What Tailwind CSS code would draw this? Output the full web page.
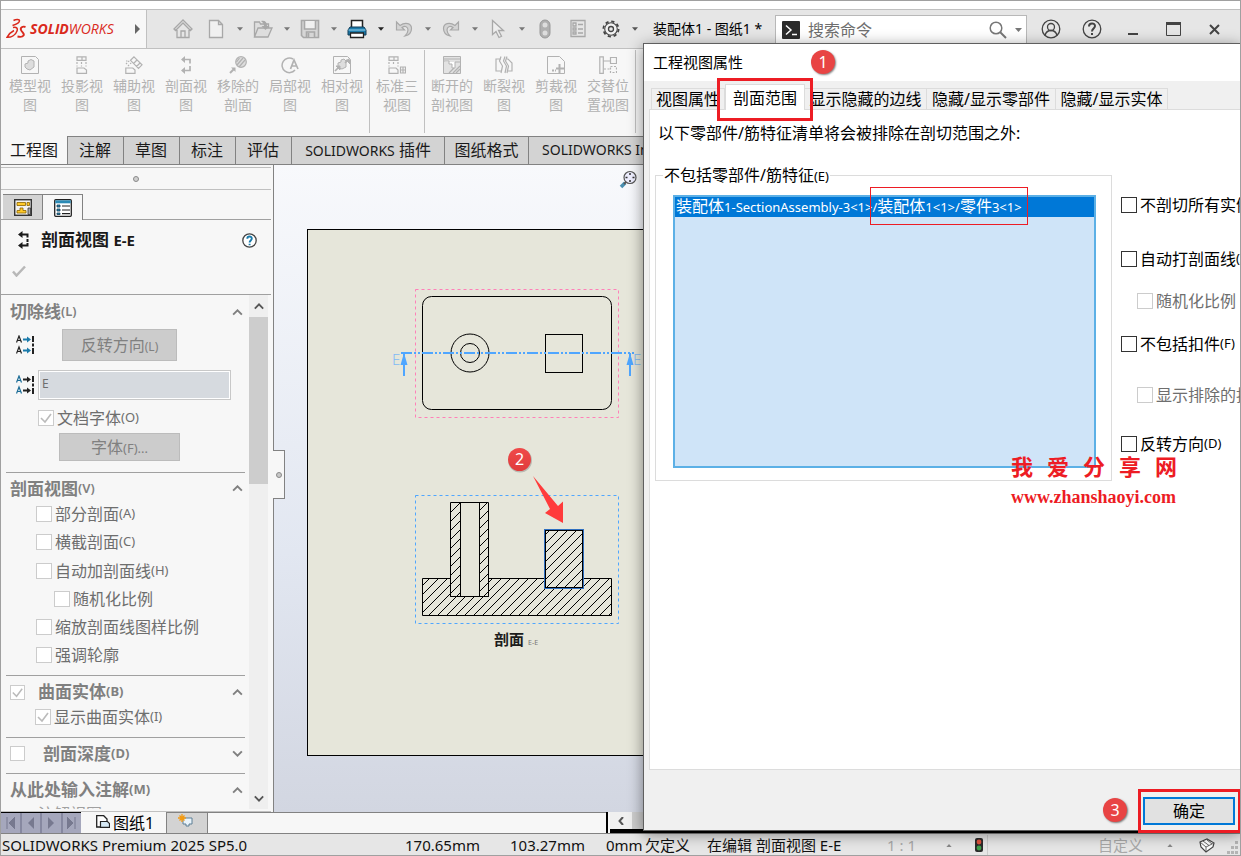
<!DOCTYPE html>
<html lang="zh-CN">
<head>
<meta charset="utf-8">
<title>SOLIDWORKS - 工程视图属性</title>
<script src="https://cdn.jsdelivr.net/npm/@tailwindcss/browser@4"></script>
</head>
<body class="overflow-hidden bg-white font-['Noto_Sans','Noto_Sans_CJK_SC',sans-serif]">
<svg class="hidden">
  <symbol id="caret" viewBox="0 0 7 4"><path d="M0 0h7L3.5 4z" fill="currentColor"/></symbol>
  <symbol id="tick" viewBox="0 0 16 16"><path d="M3 8l4 4 6-8" fill="none" stroke="currentColor" stroke-width="1.6"/></symbol>
  <symbol id="up" viewBox="0 0 12 8"><path d="M1 6.5l5-5 5 5" fill="none" stroke="currentColor" stroke-width="2.2"/></symbol>
  <symbol id="down" viewBox="0 0 12 8"><path d="M1 1.5l5 5 5-5" fill="none" stroke="currentColor" stroke-width="2.2"/></symbol>
</svg>

<div class="relative flex h-screen flex-col overflow-hidden border border-[#a0a0a0] bg-[#f7f7f7]">
  <div class="h-2 shrink-0 bg-white"></div>

  <!-- Title bar -->
  <header class="flex h-10 shrink-0 items-stretch border-y border-[#c0c0c0] bg-[#e6e6e6] text-[#a8a8a8]">
    <div class="flex w-[146px] shrink-0 items-center border-r border-[#c0c0c0] bg-[#f7f7f7] pl-[5px] text-[#da291c]">
      <svg class="h-[22px] w-5 shrink-0" viewBox="0 0 20 22" fill="none" stroke="currentColor" stroke-width="1.500"><path d="M7.500 2.500C10 1 13.500 1 13.500 2.800C13.500 4.800 10 6.500 6.500 7.500"/><path d="M7 9.500C10.500 8.700 12 10 11 13C9.500 17.500 5 19.500 1 19.300C2.500 16.500 5 14 8 12.500"/><path d="M19.500 9C16.500 8 14 9.500 15 12C16 14.500 19 15.500 17.500 17.500C16.500 19 13.500 19 11.500 18.500" stroke-width="1.900"/></svg>
      <span class="ml-1 font-['Open_Sans',sans-serif] text-sm italic"><b>SOLID</b>WORKS</span>
      <svg class="ml-auto mr-[6px] h-[10px] w-[5px] text-[#666]" viewBox="0 0 5 10"><path d="M0 0l5 5-5 5z" fill="currentColor"/></svg>
    </div>
    <div class="flex flex-1 items-center pl-6">
      <button class="mr-[9px] grid w-6 place-items-center" aria-label="主页"><svg class="size-5" viewBox="0 0 20 20" fill="none" stroke="currentColor" stroke-width="1.300"><path d="M1 10L10 1l9 9-1.500 1.500L10 4l-7.500 7.500zM4 11v7.500h12V11M8 18v-6h4v6"/></svg></button>
      <button class="grid w-6 place-items-center" aria-label="新建"><svg class="size-5" viewBox="0 0 20 20" fill="#f0f0f0" stroke="currentColor" stroke-width="1.300"><path d="M3.500 1.500h9l4 4v13h-13zM12.500 1.500v4h4"/></svg></button>
      <span class="grid w-[23px] place-items-center text-[#777]"><svg class="h-1 w-[6px]"><use href="#caret"/></svg></span>
      <button class="grid w-6 place-items-center" aria-label="打开"><svg class="size-5" viewBox="0 0 20 20" fill="#dedede" stroke="currentColor" stroke-width="1.300"><path d="M1.500 18V3h5l1 2h8v4M1.500 18L5 9h14l-4 9z"/><path d="M8 2c4-1 6 1 6 5h2.500L12.500 11 8.500 7H11c0-2-1-3.500-3-5z" fill="currentColor" stroke="none"/></svg></button>
      <span class="grid w-[23px] place-items-center text-[#777]"><svg class="h-1 w-[6px]"><use href="#caret"/></svg></span>
      <button class="grid w-6 place-items-center" aria-label="保存"><svg class="size-5" viewBox="0 0 20 20" fill="#d6d6d6" stroke="currentColor" stroke-width="1.600"><path d="M1.500 1.500h17v17h-15l-2-2z"/><path d="M4.500 2v8h11V2" fill="#f0f0f0"/><path d="M6.500 18v-5h8v5M8.500 14v4"/></svg></button>
      <span class="grid w-[23px] place-items-center text-[#777]"><svg class="h-1 w-[6px]"><use href="#caret"/></svg></span>
      <button class="grid w-6 place-items-center" aria-label="打印"><svg class="size-5" viewBox="0 0 20 20"><path d="M4.500 9V1.500h11V9" fill="#fff" stroke="#222" stroke-width="1.500"/><path d="M3 8h14l2 3v5H1v-5z" fill="#1b7bab" stroke="#123c57"/><path d="M1.500 11h17" stroke="#9bd4ef"/><path d="M3.500 14h13v4.500h-13z" fill="#fff" stroke="#222" stroke-width="1.300"/></svg></button>
      <span class="grid w-[23px] place-items-center text-[#222]"><svg class="h-1 w-[6px]"><use href="#caret"/></svg></span>
      <button class="grid w-6 place-items-center" aria-label="撤消"><svg class="h-[18px] w-[18px]" viewBox="0 0 18 18" fill="#d4d4d4" stroke="currentColor" stroke-width="1.200"><path d="M1.500 2v8h8L7 7.500c3-2 6-1 6 2.500 0 2-1 4-3 6 4-1 6.500-4 6.500-7.500 0-5-6-7-11.500-3z"/></svg></button>
      <span class="grid w-[23px] place-items-center text-[#777]"><svg class="h-1 w-[6px]"><use href="#caret"/></svg></span>
      <button class="grid w-6 place-items-center" aria-label="重做"><svg class="h-[18px] w-[18px] -scale-x-100" viewBox="0 0 18 18" fill="#d4d4d4" stroke="currentColor" stroke-width="1.200"><path d="M1.500 2v8h8L7 7.500c3-2 6-1 6 2.500 0 2-1 4-3 6 4-1 6.500-4 6.500-7.500 0-5-6-7-11.500-3z"/></svg></button>
      <span class="grid w-[23px] place-items-center text-[#777]"><svg class="h-1 w-[6px]"><use href="#caret"/></svg></span>
      <button class="grid w-6 place-items-center" aria-label="选择"><svg class="size-5" viewBox="0 0 20 20" fill="#eee" stroke="currentColor" stroke-width="1.300"><path d="M4.500 1.500v14l3.500-3 3 6 2.500-1.200-3-5.800h5z"/></svg></button>
      <span class="grid w-[23px] place-items-center text-[#777]"><svg class="h-1 w-[6px]"><use href="#caret"/></svg></span>
      <button class="mr-[9px] grid w-6 place-items-center" aria-label="重建"><svg class="h-5 w-3" viewBox="0 0 12 20"><rect x="1" y="1" width="10" height="18" rx="5" fill="#b0b0b0" stroke="#999"/><circle cx="6" cy="6" r="2.500" fill="#ddd"/><circle cx="6" cy="14" r="2.500" fill="#ddd"/></svg></button>
      <button class="mr-[9px] grid w-6 place-items-center" aria-label="文件属性"><svg class="h-5 w-4" viewBox="0 0 16 20" fill="none" stroke="currentColor" stroke-width="1.300"><path d="M1 1.500h14v16H1zM3 4h3v3H3zM3 9h3v2H3zM3 13h3v2H3zM8 5.500h5M8 10h5M8 14h5"/></svg></button>
      <button class="grid w-6 place-items-center text-[#444]" aria-label="选项"><svg class="size-5" viewBox="0 0 20 20" fill="none" stroke="currentColor"><circle cx="10" cy="10" r="7.600" stroke-width="1.800" stroke-dasharray="3.200 2.770"/><circle cx="10" cy="10" r="6.300" fill="#f2f2f2" stroke-width="1.100"/><circle cx="10" cy="10" r="2.500" fill="#e6e6e6" stroke-width="1.300"/></svg></button>
      <span class="grid w-[23px] place-items-center text-[#555]"><svg class="h-1 w-[6px]"><use href="#caret"/></svg></span>
      <span class="ml-[7px] w-[122px] whitespace-nowrap text-sm text-black">装配体1 - 图纸1 *</span>
      <label class="flex h-[33px] w-[252px] shrink-0 items-center self-end border border-b-0 border-[#b8b8b8] bg-white pb-[5px] text-[#777]">
        <svg class="ml-[6px] size-[18px] shrink-0" viewBox="0 0 18 18"><rect width="18" height="18" rx="1" fill="#2b2b2b"/><path d="M4 4.500l5 4.500-5 4.500M10 13.500h5" fill="none" stroke="#fff" stroke-width="1.500"/></svg>
        <input class="ml-2 w-full min-w-0 flex-1 bg-transparent text-base outline-none placeholder:text-[#6e6e6e]" placeholder="搜索命令" aria-label="搜索命令">
        <svg class="size-[18px] shrink-0" viewBox="0 0 18 18" fill="none" stroke="currentColor" stroke-width="1.500"><circle cx="7" cy="7" r="5.800"/><path d="M11 11l6 6" stroke-width="2"/></svg>
        <svg class="ml-2 mr-1 h-1 w-[7px] shrink-0"><use href="#caret"/></svg>
      </label>
      <div class="ml-[3px] flex items-center text-[#444]">
        <button class="grid w-[41px] place-items-center" aria-label="登录"><svg class="size-5" viewBox="0 0 20 20" fill="none" stroke="currentColor" stroke-width="1.300"><circle cx="10" cy="10" r="8.800"/><circle cx="10" cy="8" r="3.500"/><path d="M4 16.500c1-4 3-5 6-5s5 1 6 5"/></svg></button>
        <button class="grid w-[41px] place-items-center" aria-label="帮助"><svg class="size-5" viewBox="0 0 20 20" fill="none" stroke="currentColor" stroke-width="1.300"><circle cx="10" cy="10" r="8.800"/><path d="M7 7.500c0-4 6-4 6-.5 0 2.500-3 2.500-3 5.500M10 14v2" stroke-width="2"/></svg></button>
        <button class="grid w-[41px] place-items-center" aria-label="最小化"><svg class="h-4 w-[10px]" viewBox="0 0 10 16"><path d="M0 13h10" stroke="currentColor" stroke-width="2"/></svg></button>
        <button class="grid w-[41px] place-items-center" aria-label="最大化"><svg class="h-[14px] w-[15px]" viewBox="0 0 15 14"><path d="M.5 1v12.500h14V1M0 1.500h15" fill="none" stroke="currentColor"/><path d="M0 1.500h15" stroke="currentColor" stroke-width="3"/></svg></button>
        <button class="grid w-[41px] place-items-center" aria-label="关闭"><svg class="size-[11px]" viewBox="0 0 11 11"><path d="M1 1l9 9M10 1l-9 9" stroke="currentColor" stroke-width="2"/></svg></button>
      </div>
    </div>
  </header>

  <!-- Ribbon -->
  <div class="flex h-[87px] shrink-0 pb-[3px] pl-[3px] pt-px text-sm leading-[19px] text-[#b2b2b2]">
    <div class="flex border-r border-[#c0c0c0] pr-px">
      <button class="flex w-[52px] flex-col items-center pt-[6px]"><svg class="mb-[2px] size-[18px] shrink-0" viewBox="0 0 18 18" fill="none" stroke="currentColor"><path d="M.5.5h14l3 3v14H.5z"/><path d="M4 11V8l3-1V5l3-1.500L13 5v6l-4 3-3-1z" fill="#ddd"/></svg>模型视<br>图</button>
      <button class="flex w-[52px] flex-col items-center pt-[6px]"><svg class="mb-[2px] size-[18px] shrink-0" viewBox="0 0 18 18" fill="none" stroke="currentColor" stroke-width="1.200"><path d="M4 .8h9v3.500H4zM9 .8v3.500M4 12h7l2.500 2v3.300H4zM4 6v2M8.500 6v2M13 6v2M4 9.500v1M8.500 9.500v1M13 9.500v1"/></svg>投影视<br>图</button>
      <button class="flex w-[52px] flex-col items-center pt-[6px]"><svg class="mb-[2px] size-[18px] shrink-0" viewBox="0 0 18 18" fill="none" stroke="currentColor" stroke-width="1.200"><path d="M9 .8l8 8-3.500 3.500-8-8zM12 4l-3.500 3.500M15 7l-3.500 3.500M.8 12h7L10 14v3.300H.8z"/><path d="M1 8l4-4M3 10l4-4M1 5h2" stroke-dasharray="1.500 1.500"/></svg>辅助视<br>图</button>
      <button class="flex w-[52px] flex-col items-center pt-[6px]"><svg class="mb-[2px] size-[18px] shrink-0" viewBox="0 0 18 18" fill="none" stroke="currentColor" stroke-width="1.700"><path d="M6 3.500h7v4M13 10v4.500H6"/><path d="M4 3.500L8 0v7zM4 14.500L8 11v7z" fill="currentColor" stroke="none"/></svg>剖面视<br>图</button>
      <button class="flex w-[52px] flex-col items-center pt-[6px]"><svg class="mb-[2px] size-[18px] shrink-0" viewBox="0 0 18 18" fill="none" stroke="currentColor" stroke-width="1.200"><circle cx="12" cy="6" r="5.300" fill="#ddd"/><path d="M8 9l6-7M10 11l6-7M7.500 6l3-4"/><path d="M1 17l4-4" stroke-width="2"/><path d="M6.500 11.500v4.500L2 11.500z" fill="currentColor" stroke="none"/></svg>移除的<br>剖面</button>
      <button class="flex w-[52px] flex-col items-center pt-[6px]"><svg class="mb-[2px] size-[18px] shrink-0" viewBox="0 0 18 18" fill="none" stroke="currentColor" stroke-width="1.500"><path d="M12 3A7.300 7.300 0 1 0 14 14"/><path d="M9.500 13L13 4l4 9M11 10h5" stroke-width="1.700"/></svg>局部视<br>图</button>
      <button class="flex w-[52px] flex-col items-center pt-[6px]"><svg class="mb-[2px] size-[18px] shrink-0" viewBox="0 0 18 18" fill="none" stroke="currentColor"><path d="M.5.5h14l3 3v14H.5z"/><path d="M5 10V7l3-1V4l3-1 2 2v6l-4 2-3-1z" fill="#ddd"/><path d="M2 15l4-4M12 7l4-4" stroke-width="1.700"/><path d="M7 10v4l-4-4zM13 4h4v4z" fill="currentColor"/></svg>相对视<br>图</button>
    </div>
    <div class="flex border-r border-[#c0c0c0] px-px">
      <button class="flex w-[52px] flex-col items-center pt-[6px]"><svg class="mb-[2px] size-[18px] shrink-0" viewBox="0 0 18 18" fill="none" stroke="currentColor" stroke-width="1.200"><path d="M1 .8h9v3.500H1zM6 .8v3.500M1 12h7l2 2v3.300H1zM12.500 11h5v6h-5zM15 11v6M12.500 14h5M1 6v2M5.500 6v2M10 6v2M1 9.500v1M10 9.500v1"/></svg>标准三<br>视图</button>
    </div>
    <div class="flex border-r border-[#c0c0c0] px-px">
      <button class="flex w-[52px] flex-col items-center pt-[6px]"><svg class="mb-[2px] size-[18px] shrink-0" viewBox="0 0 18 18" fill="none" stroke="currentColor"><path d="M.5.5h17v17H.5z" fill="#e2e2e2"/><path d="M1 5h5v3h3v4h3v-6h5" fill="#fff"/><path d="M1 3h16M10 17l7-7M13 17l4-4M6 17l5-5" stroke-width="1.200"/></svg>断开的<br>剖视图</button>
      <button class="flex w-[52px] flex-col items-center pt-[6px]"><svg class="mb-[2px] size-[18px] shrink-0" viewBox="0 0 18 18" fill="none" stroke="currentColor" stroke-width="1.200"><path d="M6 3H1v12h5M6 .5L4.500 5l3 5L6 17M10 .5L8.500 5l3 5-1.500 7M12 .5L10.500 5l3 5-1.500 7M12 3h1l4 4v8h-4"/></svg>断裂视<br>图</button>
      <button class="flex w-[52px] flex-col items-center pt-[6px]"><svg class="mb-[2px] size-[18px] shrink-0" viewBox="0 0 18 18" fill="none" stroke="currentColor"><path d="M.5.5h12l5 5v12H.5z"/><path d="M12.500 8v9M9 12.500h8" stroke-width="2"/><path d="M5 14.500h4" stroke-width="2" stroke-dasharray="2 1"/></svg>剪裁视<br>图</button>
      <button class="flex w-[52px] flex-col items-center pt-[6px]"><svg class="mb-[2px] size-[18px] shrink-0" viewBox="0 0 18 18" fill="none" stroke="currentColor" stroke-width="1.200"><path d="M.8.8h3.500v16.500H.8zM4.500 5H11M11.500 1.500h6v6h-6z"/><path d="M5 13h6M11.500 10.500h6v6h-6z" stroke-dasharray="2 1.500"/></svg>交替位<br>置视图</button>
    </div>
  </div>

  <!-- Command tabs -->
  <nav class="flex h-[29px] shrink-0 whitespace-nowrap border-b border-[#828282] text-base leading-6 text-[#1a1a1a]">
    <button class="w-[66px] bg-[#f7f7f7]">工程图</button>
    <button class="border-l border-t border-[#828282] bg-[#d3d3d3] px-[11px] pb-[2px] pr-3">注解</button>
    <button class="border-l border-t border-[#828282] bg-[#d3d3d3] px-[11px] pb-[2px] pr-3">草图</button>
    <button class="border-l border-t border-[#828282] bg-[#d3d3d3] px-[11px] pb-[2px] pr-3">标注</button>
    <button class="border-l border-t border-[#828282] bg-[#d3d3d3] px-[11px] pb-[2px] pr-3">评估</button>
    <button class="w-[153px] border-l border-t border-[#828282] bg-[#d3d3d3] pb-[2px]"><span class="text-sm">SOLIDWORKS</span> 插件</button>
    <button class="w-[84px] border-l border-t border-[#828282] bg-[#d3d3d3] pb-[2px]">图纸格式</button>
    <button class="flex-1 border-l border-t border-[#828282] bg-[#d3d3d3] pb-[2px] pl-[13px] text-left text-sm">SOLIDWORKS Inspection</button>
  </nav>

  <main class="flex min-h-0 flex-1">
    <!-- Property manager -->
    <aside class="relative flex w-[273px] shrink-0 flex-col border-r border-[#828282] pr-[2px]">
      <div class="mt-[2px] flex h-[23px] items-center justify-center border-y border-[#c0c0c0]"><span class="size-[6px] rounded-full border border-[#8a8a8a] bg-[#d0d0d0]"></span></div>
      <div class="flex h-[30px] items-end border-b border-[#a0a0a0] pl-[2px] pt-1">
        <button class="grid h-[25px] w-10 place-items-center border-r border-t border-[#828282] bg-[#d3d3d3]" aria-label="设计树"><svg class="h-[17px] w-[18px]" viewBox="0 0 18 17"><rect x=".7" y=".7" width="16.600" height="15.600" fill="#f2f2f2" stroke="#333" stroke-width="1.400"/><path d="M3 3.500h8.500v3H3zM13 3.500h2.500v3H13zM6 9h3v2.500h3V14H3v-2.500h3z" fill="#ffc928" stroke="#8a6500" stroke-width=".8"/><path d="M14 9h2.500v6.500H14z" fill="#aaa" stroke="#333" stroke-width=".8"/></svg></button>
        <button class="-mb-px grid h-[26px] w-10 place-items-center border-r border-t border-[#828282] bg-[#f7f7f7]" aria-label="属性"><svg class="h-[18px] w-[18px]" viewBox="0 0 18 18"><rect x=".7" y=".7" width="16.600" height="16.600" rx="1" fill="#fff" stroke="#222" stroke-width="1.300"/><path d="M1.300 1.300h15.400v3H1.300z" fill="#2b8ab5"/><path d="M3 6h3v2H3zM3 10h3v2H3zM3 14h3v1.500H3z" fill="#2b8ab5" stroke="#123c57" stroke-width=".8"/><path d="M8 7h8M8 11h8M8 14.700h8" stroke="#222" stroke-width="1.200"/></svg></button>
      </div>
      <div class="h-[75px] shrink-0 border-b border-[#a0a0a0]">
        <div class="flex h-10 items-center pl-4 pr-[14px]">
          <svg class="size-[18px]" viewBox="0 0 18 18" fill="none" stroke="#1a1a1a" stroke-width="2"><path d="M5 3.500h5.500v3M10.500 8v3M10.500 12v2.500H5"/><path d="M1 3.500L5.500 0v7zM1 14.500L5.500 11v7z" fill="#1a1a1a" stroke="none"/></svg>
          <h1 class="ml-[6px] text-[17px] font-bold text-[#1a1a1a]">剖面视图 <span class="text-[15px]">E-E</span></h1>
          <button class="ml-auto" aria-label="帮助"><svg class="size-[15px]" viewBox="0 0 15 15" fill="none"><circle cx="7.500" cy="7.500" r="6.700" fill="#fff" stroke="#444" stroke-width="1.300"/><path d="M5.300 5.800c0-3 4.500-3 4.500-.2 0 1.900-2.200 1.900-2.200 4M7.600 10.800v1.500" stroke="#1b7bab" stroke-width="1.900"/></svg></button>
        </div>
        <svg class="ml-[11px] mt-[5px] h-3 w-[14px]" viewBox="0 0 14 12"><path d="M1 6.500l3.500 4L13 1.500" fill="none" stroke="#b8b8b8" stroke-width="2.500"/></svg>
      </div>
      <div class="flex min-h-0 flex-1 border-b border-[#c0c0c0] pb-[2px] pr-[3px] text-base text-[#6e6e6e]">
        <div class="min-w-0 flex-1 overflow-hidden pl-[5px] pr-1">
          <section class="border-b border-[#a0a0a0] pb-[11px]">
            <h2 class="flex h-[34px] items-center pl-1 pr-[2px] text-[17px] font-bold text-[#808080]">切除线<span class="text-[13px] font-semibold">(L)</span><svg class="ml-auto h-[7px] w-[11px]"><use href="#up"/></svg></h2>
            <div class="flex h-8 items-center pl-[10px]">
              <svg class="h-5 w-[19px]" viewBox="0 0 19 20"><path d="M.5 7.500L3 1l2.500 6.500M1.300 5.500h3.400M.5 18.500L3 12l2.500 6.500M1.300 16.500h3.400" fill="none" stroke="#222" stroke-width="1.200"/><path d="M7 4.500h5M7 15.500h5" stroke="#1b7bab" stroke-width="2"/><path d="M11 1.500l4 3-4 3zM11 12.500l4 3-4 3z" fill="#1b7bab"/><path d="M17 1v6M17 8.500v3M17 13v6" stroke="#222" stroke-width="2"/></svg>
              <button class="ml-[27px] h-8 w-[115px] border border-[#bcbcbc] bg-[#ccc] text-[#808080]">反转方向<span class="text-xs">(L)</span></button>
            </div>
            <label class="mt-[9px] flex h-[30px] items-center pl-[10px]">
              <svg class="h-5 w-[19px]" viewBox="0 0 19 20"><path d="M.5 7.500L3 1l2.500 6.500M1.300 5.500h3.400M.5 18.500L3 12l2.500 6.500M1.300 16.500h3.400" fill="none" stroke="#1b6c96" stroke-width="1.200"/><path d="M7 4.500h5M7 15.500h5" stroke="#222" stroke-width="2"/><path d="M11 1.500l4 3-4 3zM11 12.500l4 3-4 3z" fill="#222"/><path d="M17 1v6M17 8.500v3M17 13v6" stroke="#222" stroke-width="2"/></svg>
              <input class="ml-[3px] h-[30px] w-[193px] border border-[#c8c8c8] bg-[#d6dadf] px-[3px] pb-1 text-xs text-[#6e6e6e] shadow-[inset_0_0_0_1px_white]" value="E" aria-label="剖面标号">
            </label>
            <label class="flex h-[33px] items-center pl-8 pt-[2px]"><span class="relative mr-[3px] flex"><input type="checkbox" checked class="size-4 appearance-none border border-[#ccc] bg-white"><svg class="pointer-events-none absolute inset-0 size-4 text-[#bbb]"><use href="#tick"/></svg></span>文档字体<span class="text-[13px]">(O)</span></label>
            <button class="ml-[53px] block h-7 w-[121px] border border-[#bcbcbc] bg-[#ccc] text-[#808080]">字体<span class="text-[13px]">(F)...</span></button>
          </section>
          <section class="border-b border-[#a0a0a0] pb-[7px]">
            <h2 class="flex h-[27px] items-center pl-1 pr-[2px] pt-1 text-[17px] font-bold text-[#808080]">剖面视图<span class="text-[13px] font-semibold">(V)</span><svg class="ml-auto h-[7px] w-[11px]"><use href="#up"/></svg></h2>
            <label class="flex h-7 items-center pl-[30px]"><input type="checkbox" class="mr-[3px] size-4 appearance-none border border-[#ccc] bg-white">部分剖面<span class="text-[13px]">(A)</span></label>
            <label class="flex h-7 items-center pl-[30px]"><input type="checkbox" class="mr-[3px] size-4 appearance-none border border-[#ccc] bg-white">横截剖面<span class="text-[13px]">(C)</span></label>
            <label class="flex h-[29px] items-center pl-[30px]"><input type="checkbox" class="mr-[3px] size-4 appearance-none border border-[#ccc] bg-white">自动加剖面线<span class="text-[13px]">(H)</span></label>
            <label class="flex h-7 items-center pl-12"><input type="checkbox" class="mr-[3px] size-4 appearance-none border border-[#ccc] bg-white">随机化比例</label>
            <label class="flex h-7 items-center pl-[30px]"><input type="checkbox" class="mr-[3px] size-4 appearance-none border border-[#ccc] bg-white">缩放剖面线图样比例</label>
            <label class="flex h-[27px] items-center pl-[30px]"><input type="checkbox" class="mr-[3px] size-4 appearance-none border border-[#ccc] bg-white">强调轮廓</label>
          </section>
          <section class="border-b border-[#a0a0a0] pb-[11px]">
            <h2 class="flex h-8 items-center pl-1 pr-[2px] text-[17px] font-bold text-[#808080]"><label class="flex items-center"><span class="relative mr-[13px] flex"><input type="checkbox" checked class="size-[15px] appearance-none border border-[#ccc] bg-white"><svg class="pointer-events-none absolute inset-0 size-[15px] text-[#bbb]"><use href="#tick"/></svg></span>曲面实体<span class="text-[13px]">(B)</span></label><svg class="ml-auto h-[7px] w-[11px]"><use href="#up"/></svg></h2>
            <label class="flex h-[18px] items-center pl-[29px]"><span class="relative mr-[3px] flex"><input type="checkbox" checked class="size-4 appearance-none border border-[#ccc] bg-white"><svg class="pointer-events-none absolute inset-0 size-4 text-[#bbb]"><use href="#tick"/></svg></span>显示曲面实体<span class="text-[13px]">(I)</span></label>
          </section>
          <section class="border-b border-[#a0a0a0] pb-1">
            <h2 class="flex h-[31px] items-center pl-1 pr-[2px] text-[17px] font-bold text-[#808080]"><label class="flex items-center"><input type="checkbox" class="mr-[18px] size-[15px] appearance-none border border-[#ccc] bg-white">剖面深度<span class="text-[13px]">(D)</span></label><svg class="ml-auto h-[7px] w-[11px]"><use href="#down"/></svg></h2>
          </section>
          <section>
            <h2 class="flex h-8 items-center pl-1 pr-[2px] text-[17px] font-bold text-[#808080]">从此处输入注解<span class="text-[13px]">(M)</span><svg class="ml-auto h-[7px] w-[11px]"><use href="#up"/></svg></h2>
            <p class="h-4 pl-8 leading-4 text-[#a0a0a0]">注解视图</p>
          </section>
        </div>
        <div class="flex w-[19px] flex-col items-center bg-[#efefef] text-[#555]">
          <button class="grid h-[22px] w-full place-items-center" aria-label="向上滚动"><svg class="h-[7px] w-[10px]"><use href="#up"/></svg></button>
          <div class="h-[167px] w-full bg-[#cdcdcd]"></div>
          <button class="mt-auto grid h-[22px] w-full place-items-center" aria-label="向下滚动"><svg class="h-[7px] w-[10px]"><use href="#down"/></svg></button>
        </div>
      </div>
      <button class="absolute left-[272px] top-[285px] z-10 grid h-[49px] w-3 place-items-center border border-l-0 border-[#828282] bg-[#f7f7f7]" aria-label="折叠面板"><span class="size-[6px] rounded-full border border-[#8a8a8a] bg-[#c8c8c8]"></span></button>
    </aside>

    <!-- Drawing sheet -->
    <div class="min-w-0 flex-1 overflow-hidden bg-linear-to-b from-[#f8f9fc] from-0% via-[#e2e7f1] via-60% to-[#d2d6e1]">
      <svg width="967" height="647" viewBox="274 165 967 647" fill="none" class="max-w-none font-['Noto_Sans','Noto_Sans_CJK_SC',sans-serif]">
        <defs>
          <pattern id="hatch" width="9" height="9" patternUnits="userSpaceOnUse"><path d="M0 8h1v1H0zM1 7h1v1H1zM2 6h1v1H2zM3 5h1v1H3zM4 4h1v1H4zM5 3h1v1H5zM6 2h1v1H6zM7 1h1v1H7zM8 0h1v1H8z" fill="#000" shape-rendering="crispEdges"/></pattern>
          <linearGradient id="red" x2="0" y2="1"><stop stop-color="#f04a4a"/><stop offset="1" stop-color="#e03c3c"/></linearGradient>
        </defs>
        <rect x="307.500" y="229.500" width="700" height="526" fill="#e6e6da" stroke="#000"/>
        <g stroke="#555" stroke-width="1.200"><path d="M621 187l4-4" stroke="#4a8fb0" stroke-width="3.500"/><path d="M624 184l2-2" stroke-width="2"/><circle cx="630" cy="177.500" r="6" fill="#eef"/><path d="M630 173v2M630 180v2M625.500 177.500h2M632.500 177.500h2" stroke="#333" stroke-width="1.500"/></g>
        <rect x="415.500" y="289.500" width="203" height="128" stroke="#ff80b8" stroke-dasharray="3 3"/>
        <rect x="422.500" y="296.500" width="189" height="113" rx="9" stroke="#000"/>
        <circle cx="470" cy="353" r="19" stroke="#000"/><circle cx="470" cy="353" r="9.500" stroke="#000"/>
        <rect x="545.500" y="334.500" width="37" height="38" stroke="#000"/>
        <path d="M401 353h233" stroke="#4fa6ff" stroke-width="2" stroke-dasharray="11 2 2 2 2 2"/>
        <path d="M404 353v23M630 353v23" stroke="#4fa6ff" stroke-width="2"/>
        <path d="M404 353l3.500 12h-7zM630 353l3.500 12h-7z" fill="#4fa6ff"/>
        <g fill="#7fbaf5" font-size="15" font-weight="300"><text x="392" y="365">E</text><text x="633" y="365">E</text></g>
        <rect x="415.500" y="495.500" width="203" height="128" stroke="#4fa6ff" stroke-dasharray="3 3"/>
        <path d="M422.500 578.500h28v18h38v-18h56v9h39v-9h28v37h-189z" fill="url(#hatch)" stroke="#000"/>
        <path d="M450.500 502.500h10v94h-10zM479.500 502.500h9v94h-9z" fill="url(#hatch)"/>
        <path d="M450.500 502.500h38v94h-38zM460.500 502.500v94M479.500 502.500v94" stroke="#000"/>
        <rect x="544.500" y="529.500" width="39" height="59" stroke="#2f6fc0"/>
        <rect x="545.500" y="530.500" width="37" height="57" fill="url(#hatch)" stroke="#000"/>
        <text x="494" y="645" font-size="15" font-weight="700" fill="#1c1c1c">剖面</text>
        <text x="528" y="645" font-size="7" fill="#777">E-E</text>
        <path d="M533 476L558 506l5-4.500v21.500l-18-10 5-4z" fill="#ff3b3b"/>
        <circle cx="520" cy="460.500" r="12" fill="#666" opacity=".35"/>
        <circle cx="519.500" cy="459.500" r="11.500" fill="url(#red)"/>
        <text x="519.500" y="465" font-size="16" text-anchor="middle" fill="#fff">2</text>
      </svg>
    </div>
  </main>

  <!-- Sheet tabs -->
  <div class="flex h-[22px] shrink-0 border-b border-[#828282]">
    <div class="grid w-20 grid-cols-4 gap-[2px] border-t border-black bg-[#8688a0] text-[#77798f]">
      <button class="grid place-items-center bg-[#a5a7bc]" aria-label="第一张"><svg class="h-3 w-[9px]" viewBox="0 0 9 12"><path d="M1 0v12M9 0v12L3 6z" fill="currentColor" stroke="currentColor"/></svg></button>
      <button class="grid place-items-center bg-[#a5a7bc]" aria-label="上一张"><svg class="h-3 w-[6px]" viewBox="0 0 6 12"><path d="M6 0v12L0 6z" fill="currentColor"/></svg></button>
      <button class="grid place-items-center bg-[#a5a7bc]" aria-label="下一张"><svg class="h-3 w-[6px]" viewBox="0 0 6 12"><path d="M0 0v12L6 6z" fill="currentColor"/></svg></button>
      <button class="grid place-items-center bg-[#a5a7bc]" aria-label="最后一张"><svg class="h-3 w-[9px]" viewBox="0 0 9 12"><path d="M8 0v12M0 0v12L6 6z" fill="currentColor" stroke="currentColor"/></svg></button>
    </div>
    <button class="flex w-[86px] items-center border-r border-[#828282] pl-[15px] text-base leading-5 text-black"><svg class="mb-[3px] mr-[3px] h-[13px] w-[14px] shrink-0" viewBox="0 0 14 13"><path d="M.7.7h7L11 4v8H.7z" fill="#fff" stroke="#222" stroke-width="1.300"/><path d="M4.500 6.500h7l2 2v3.800h-9z" fill="#d5e8f4" stroke="#222" stroke-width="1.200"/></svg>图纸1</button>
    <button class="grid w-10 place-items-center border-t border-[#828282] bg-[#d3d3d3] pb-[6px] pr-1" aria-label="添加图纸"><svg class="h-[13px] w-[15px]" viewBox="0 0 15 13"><path d="M5 4h9v6h-3v2H8v-2H5z" fill="#e9f3fa" stroke="#5c7f95"/><path d="M4 0v8M0 4h8M1.500 1.500l5 5M6.500 1.500l-5 5" stroke="#f39a12" stroke-width="1.300"/></svg></button>
    <div class="flex-1 border-l border-t border-[#828282]"></div>
    <div class="flex w-[634px] border-l-2 border-black bg-[#f7f7f7] pl-[2px]"><div class="flex flex-1 border-b-4 border-black"><button class="grid w-[22px] place-items-center bg-[#f0f0f0] text-[#555]" aria-label="向左滚动"><svg class="h-2 w-[6px]" viewBox="0 0 6 8"><path d="M5 0L1.500 4 5 8" fill="none" stroke="currentColor" stroke-width="2"/></svg></button><span class="flex-1 bg-[#cdcdcd]"></span></div></div>
  </div>

  <!-- Status bar -->
  <footer class="flex h-[21px] shrink-0 items-center whitespace-nowrap bg-[#e6e6e6] pl-px pt-px text-[15px] leading-5 text-[#111]">
    <span class="w-[403px]">SOLIDWORKS Premium 2025 SP5.0</span>
    <span class="w-[105px]">170.65mm</span>
    <span class="w-24">103.27mm</span>
    <span class="w-[39px]">0mm</span>
    <span class="w-[62px]">欠定义</span>
    <span class="w-[180px]">在编辑 剖面视图 E-E</span>
    <span class="w-[59px] text-[#a8a8a8]">1 : 1</span>
    <svg class="h-[3px] w-[6px] rotate-180 text-[#888]"><use href="#caret"/></svg>
    <svg class="ml-[23px] h-[14px] w-2" viewBox="0 0 8 14"><rect width="8" height="14" rx="2" fill="#2b2b2b"/><circle cx="4" cy="4" r="2.400" fill="#e0523c"/><circle cx="4" cy="10" r="2.400" fill="#3fa04a"/></svg>
    <span class="ml-1 h-full w-px bg-[#ccc]"></span>
    <span class="ml-auto text-[#a8a8a8]">自定义</span>
    <svg class="ml-6 h-[3px] w-[6px] rotate-180 text-[#888]"><use href="#caret"/></svg>
    <svg class="ml-[26px] h-[15px] w-4" viewBox="0 0 16 15" fill="#fff" stroke="#444" stroke-width="1.200"><path d="M1 4l7-3 7 4-1 4-7 5-5-5z"/><path d="M1 4l6 5 8-4M7 9v5M4 3l6 4.500M8 2l5 4" stroke-width=".8"/></svg>
    <svg class="ml-3 mr-px h-[14px] w-3 self-end" viewBox="0 0 12 14" fill="#b4b4b4"><path d="M8 0h3v3H8zM4 5h3v3H4zM8 5h3v3H8zM0 10h3v3H0zM4 10h3v3H4zM8 10h3v3H8z"/></svg>
  </footer>

  <!-- Dialog window -->
  <div role="dialog" aria-label="工程视图属性" class="absolute -right-px bottom-6 left-[642px] top-[42px] z-20 flex flex-col border border-r-0 border-[#5f5f5f] bg-[#f0f0f0] text-base text-black shadow-[0_3px_14px_rgba(0,0,0,0.45)]">
    <div class="flex h-[37px] shrink-0 items-center bg-white pl-[9px] text-[15px]">工程视图属性</div>
    <div class="flex h-[29px] shrink-0 items-end whitespace-nowrap pl-[7px]" role="tablist">
      <button role="tab" class="h-[22px] w-[74px] border border-b-0 border-[#dcdcdc] pb-[2px] leading-5">视图属性</button>
      <button role="tab" aria-selected="true" class="z-10 h-[26px] w-[80px] border border-b-0 border-[#dcdcdc] bg-white leading-6">剖面范围</button>
      <button role="tab" class="h-[22px] w-[122px] border border-b-0 border-l-0 border-[#dcdcdc] pb-[2px] leading-5">显示隐藏的边线</button>
      <button role="tab" class="h-[22px] w-[129px] border border-b-0 border-l-0 border-[#dcdcdc] pb-[2px] leading-5">隐藏/显示零部件</button>
      <button role="tab" class="h-[22px] w-[112px] border border-b-0 border-l-0 border-[#dcdcdc] pb-[2px] leading-5">隐藏/显示实体</button>
    </div>
    <div class="-mt-px ml-[5px] flex-1 overflow-hidden border border-r-0 border-[#dcdcdc] bg-white pl-[5px]">
      <p class="flex h-[55px] items-start pl-[3px] pt-[11px]">以下零部件/筋特征清单将会被排除在剖切范围之外:</p>
      <div class="flex items-start whitespace-nowrap">
        <fieldset class="w-[457px] shrink-0 border border-[#dcdcdc] px-[17px] pb-3 pr-[15px]">
          <legend class="-ml-[10px] h-5 px-px leading-5">不包括零部件/筋特征<span class="text-[13px]">(E)</span></legend>
          <ul role="listbox" aria-label="不包括零部件/筋特征" class="mt-[10px] h-[273px] border-2 border-[#5cb0e6] bg-[#cfe4f8] text-white">
            <li role="option" aria-selected="true" class="h-5 bg-[#0078d7] pl-px leading-[18px]">装配体<span class="text-[13px]">1-SectionAssembly-3&lt;1&gt;/</span>装配体<span class="text-[13px]">1&lt;1&gt;/</span>零件<span class="text-[13px]">3&lt;1&gt;</span></li>
          </ul>
        </fieldset>
        <div class="ml-[9px] flex shrink-0 flex-col pt-[27px]">
          <label class="flex h-[26px] items-center"><input type="checkbox" class="mr-[3px] size-4 appearance-none border border-[#333] bg-white">不剖切所有实例</label>
          <label class="mt-7 flex h-[26px] items-center"><input type="checkbox" class="mr-[3px] size-4 appearance-none border border-[#333] bg-white">自动打剖面线<span class="text-[13px]">(A)</span></label>
          <label class="mt-4 flex h-[26px] items-center pl-4 text-[#6e6e6e]"><input type="checkbox" disabled class="mr-[3px] size-4 appearance-none border border-[#ccc] bg-white">随机化比例</label>
          <label class="mt-[17px] flex h-[26px] items-center"><input type="checkbox" class="mr-[3px] size-4 appearance-none border border-[#333] bg-white">不包括扣件<span class="text-[13px]">(F)</span></label>
          <label class="mt-[25px] flex h-[26px] items-center pl-4 text-[#6e6e6e]"><input type="checkbox" disabled class="mr-[3px] size-4 appearance-none border border-[#ccc] bg-white">显示排除的扣件</label>
          <label class="mt-[23px] flex h-[26px] items-center"><input type="checkbox" class="mr-[3px] size-4 appearance-none border border-[#333] bg-white">反转方向<span class="text-[13px]">(D)</span></label>
        </div>
      </div>
    </div>
    <div class="flex h-[60px] shrink-0 items-end justify-end pb-[5px] pr-[6px]">
      <button class="h-7 w-[92px] border-2 border-[#0078d7] bg-[#e1e1e1] leading-6">确定</button>
    </div>

    <!-- Callouts over the dialog -->
    <span class="absolute left-[73px] top-[34px] z-20 h-[43px] w-24 border-[3px] border-[#ed1c24]"></span>
    <span class="absolute left-[226px] top-[143px] z-20 h-[38px] w-[158px] border border-[#ed1c24]"></span>
    <span class="absolute -bottom-[3px] right-0 z-20 h-11 w-[103px] border-[3px] border-[#ed1c24]"></span>
    <span class="absolute left-[167px] top-[6px] grid size-6 place-items-center rounded-full bg-[#e84444] text-base leading-6 text-white shadow-[1px_1px_2px_rgba(0,0,0,0.5)]">1</span>
    <span class="absolute bottom-2 right-[114px] grid size-6 place-items-center rounded-full bg-[#e84444] text-base leading-6 text-white shadow-[1px_1px_2px_rgba(0,0,0,0.5)]">3</span>
    <div class="absolute left-[367px] top-[409px] z-20 text-[#ed1c24]">
      <p class="flex gap-[14px] text-[22px] font-bold leading-[26px]"><span>我</span><span>爱</span><span>分</span><span>享</span><span>网</span></p>
      <a href="#" class="mt-[6px] block font-['Liberation_Serif',serif] text-[18px] font-bold leading-6">www.zhanshaoyi.com</a>
    </div>
  </div>
</div>
</body>
</html>
